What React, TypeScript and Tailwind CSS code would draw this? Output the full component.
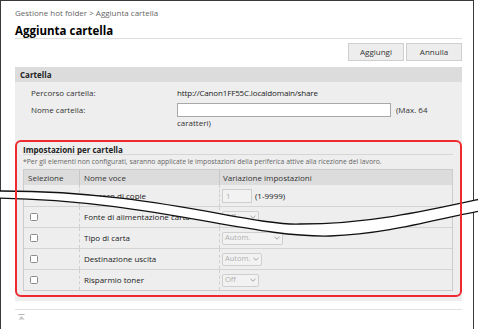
const rows = [
  { name: "Numero di copie", kind: "input" },
  { name: "Fonte di alimentazione carta", kind: "select", value: "Off", w: "w-[37px]" },
  { name: "Tipo di carta", kind: "select", value: "Autom.", w: "w-[61px]" },
  { name: "Destinazione uscita", kind: "select", value: "Autom.", w: "w-[40px]" },
  { name: "Risparmio toner", kind: "select", value: "Off", w: "w-[37px]" },
]

const Chevron = () => (
  <svg width="6" height="4" viewBox="0 0 6 4" className="shrink-0">
    <path d="M0.5 0.8 L3 3.2 L5.5 0.8" fill="none" stroke="#9a9a9a" strokeWidth="0.9" />
  </svg>
)

const Select = ({ value, w }: { value: string; w: string }) => (
  <div className={`${w} h-[13px] border border-[#cfcfcf] bg-[#f2f2f2] rounded-[2px] flex items-center justify-between pl-[2px] pr-[2px] text-[7.5px] text-[#b0b0b0] whitespace-nowrap`}>
    <span>{value}</span>
    <Chevron />
  </div>
)

const Break = () => (
  <svg className="absolute left-0 top-0 pointer-events-none" width="478" height="329" viewBox="0 0 478 329">
    <path
      d="M -5 191 C 150 190, 250 226, 300 224 C 370 224, 430 210, 485 198 L 485 210 C 440 218, 390 234, 330 236 C 250 238, 150 200, -5 198 Z"
      fill="#fff"
    />
    <path d="M -5 191 C 150 190, 250 226, 300 224 C 370 224, 430 210, 485 198" fill="none" stroke="#111" strokeWidth="1.3" />
    <path d="M -5 198 C 150 200, 250 238, 330 236 C 390 234, 440 218, 485 210" fill="none" stroke="#111" strokeWidth="1.3" />
    <line x1="16" y1="185" x2="16" y2="225" stroke="#ee2a2f" strokeWidth="2" />
    <line x1="461" y1="190" x2="461" y2="240" stroke="#ee2a2f" strokeWidth="2" />
  </svg>
)

export default function App() {
  return (
    <div className="relative w-[478px] h-[329px] overflow-hidden bg-white font-['Open_Sans',sans-serif] text-[8px] text-[#333]">
      <div className="w-[474px] h-[340px] border-l border-t border-r border-[#3a3a3a] pl-[14px] pr-[11px] pt-[5px]">
        <div className="h-[14px] leading-[14px] text-[8px] text-[#666]">Gestione hot folder &gt; Aggiunta cartella</div>
        <div className="mt-[4px] h-[15px] leading-[14px] text-[11.5px] font-bold text-black border-b border-[#dedede]">
          Aggiunta cartella
        </div>
        <div className="mt-[4px] flex justify-end gap-[2px]">
          <button className="w-[56px] h-[18px] bg-[#ededed] border border-[#cfcfcf] text-[8px] text-[#333]">Aggiungi</button>
          <button className="w-[56px] h-[18px] bg-[#ededed] border border-[#cfcfcf] text-[8px] text-[#333]">Annulla</button>
        </div>

        <div className="mt-[6px] bg-[#eeeeee] pb-[4px]">
          <div className="h-[15px] leading-[15px] bg-[#dcdcdc] pl-[5px] font-bold text-[#222]">Cartella</div>
          <div className="pl-[16px] pt-[3px] h-[58px]">
            <div className="flex h-[16px] items-center">
              <div className="w-[146px]">Percorso cartella:</div>
              <div className="text-[#222] tracking-[-0.15px]">http://Canon1FF55C.localdomain/share</div>
            </div>
            <div className="flex mt-[2px]">
              <div className="w-[146px] leading-[14px]">Nome cartella:</div>
              <div className="w-[270px]">
                <div className="flex items-center h-[14px]">
                  <input className="w-[214px] h-[14px] border border-[#a9a9a9] bg-white" />
                  <span className="ml-[5px]">(Max. 64</span>
                </div>
                <div className="leading-[12px] mt-[0px]">caratteri)</div>
              </div>
            </div>
          </div>

          <div className="border-2 border-[#ee2a2f] rounded-[6px] pl-[6px] pr-[7px] pb-[4px]">
            <div className="mt-[2px] h-[11px] leading-[11px] font-bold text-[#222] border-b border-[#d6d6d6]">
              Impostazioni per cartella
            </div>
            <div className="mt-[1px] h-[12px] leading-[12px] text-[6.8px] text-[#666]">
              *Per gli elementi non configurati, saranno applicate le impostazioni della periferica attive alla ricezione del lavoro.
            </div>
            <div className="mt-[1px] border border-[#cccccc]">
              <div className="flex h-[15px] bg-[#dcdcdc] text-[#333] leading-[15px]">
                <div className="w-[56px] pl-[4px] border-r border-[#c8c8c8]">Selezione</div>
                <div className="w-[140px] pl-[4px] border-r border-[#c8c8c8]">Nome voce</div>
                <div className="pl-[3px]">Variazione impostazioni</div>
              </div>
              {rows.map((r, i) => (
                <div key={r.name} className={`flex h-[21px] items-stretch ${i > 0 ? "border-t border-[#d4d4d4]" : ""}`}>
                  <div className="w-[56px] pl-[6px] flex items-center border-r border-dashed border-[#cfcfcf]">
                    <div className="w-[8px] h-[8px] bg-white border border-[#8a8a8a] rounded-[1.5px]" />
                  </div>
                  <div className="w-[140px] pl-[4px] flex items-center border-r border-dashed border-[#cfcfcf] text-[#222]">
                    {r.name}
                  </div>
                  <div className="pl-[2px] flex items-center gap-[3px]">
                    {r.kind === "input" ? (
                      <>
                        <div className="w-[30px] h-[14px] border border-[#cfcfcf] bg-[#f2f2f2] pl-[3px] leading-[12px] text-[#b0b0b0]">1</div>
                        <span className="text-[#222]">(1-9999)</span>
                      </>
                    ) : (
                      <Select value={r.value!} w={r.w!} />
                    )}
                  </div>
                </div>
              ))}
            </div>
          </div>
        </div>

        <div className="mt-[8px] border-t border-[#e2e2e2] pt-[4px] pl-[3px]">
          <svg width="7" height="6" viewBox="0 0 7 6">
            <line x1="0.5" y1="0.5" x2="6.5" y2="0.5" stroke="#b5b5b5" strokeWidth="1" />
            <path d="M3.5 2 L6.5 5.5 L0.5 5.5 Z" fill="#c5c5c5" />
          </svg>
        </div>
      </div>
      <Break />
    </div>
  )
}
